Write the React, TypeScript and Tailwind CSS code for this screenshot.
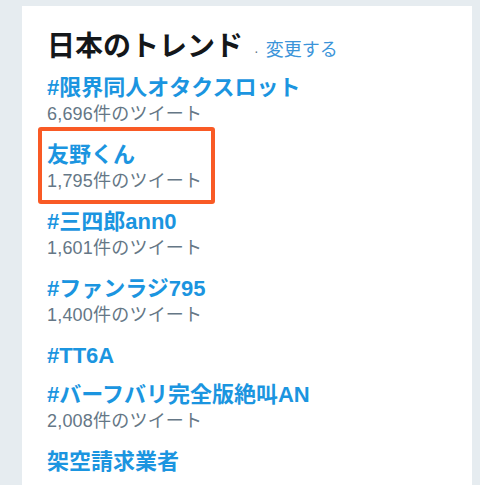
import React, { FC } from "react";

type Trend = {
  name: string;
  count?: string;
  highlighted?: boolean;
};

const TRENDS: Trend[] = [
  { name: "#限界同人オタクスロット", count: "6,696件のツイート" },
  { name: "友野くん", count: "1,795件のツイート", highlighted: true },
  { name: "#三四郎ann0", count: "1,601件のツイート" },
  { name: "#ファンラジ795", count: "1,400件のツイート" },
  { name: "#TT6A" },
  { name: "#バーフバリ完全版絶叫AN", count: "2,008件のツイート" },
  { name: "架空請求業者" },
];

const TrendItem: FC<{ trend: Trend }> = ({ trend }) => {
  return (
    <li className="relative">
      <a className="block text-[22px] leading-[24px] font-bold text-[#1b95e0]">
        {trend.name}
      </a>
      {trend.count && (
        <div className="text-[18px] leading-[28px] tracking-[0.2px] text-[#657786]">
          {trend.count}
        </div>
      )}
      {/* 注目の枠 */}
      {trend.highlighted && (
        <span className="absolute -left-[9px] -top-[16px] w-[177px] h-[77px] border-4 border-[#f95a25] rounded-[3px]" />
      )}
    </li>
  );
};

export default function App() {
  return (
    <div
      className="w-[480px] h-[485px] overflow-hidden bg-[#e6ecf0] pt-[6px] pl-[22px]"
      style={{ fontFamily: '"Liberation Sans", "Noto Sans CJK JP", sans-serif' }}
    >
      <div className="w-[450px] h-[479px] bg-white px-[25px] pt-[25px]">
        <div className="flex items-baseline">
          <h2 className="text-[28px] leading-[32px] font-bold text-[#14171a]">
            日本のトレンド
          </h2>
          <span className="ml-[11px] text-[14px] text-[#657786]">·</span>
          <a className="ml-[7px] text-[18px] text-[#3b94d9]">変更する</a>
        </div>
        <ul className="mt-[12px] flex flex-col gap-[15px]">
          {TRENDS.map((trend) => (
            <TrendItem key={trend.name} trend={trend} />
          ))}
        </ul>
      </div>
    </div>
  );
}
